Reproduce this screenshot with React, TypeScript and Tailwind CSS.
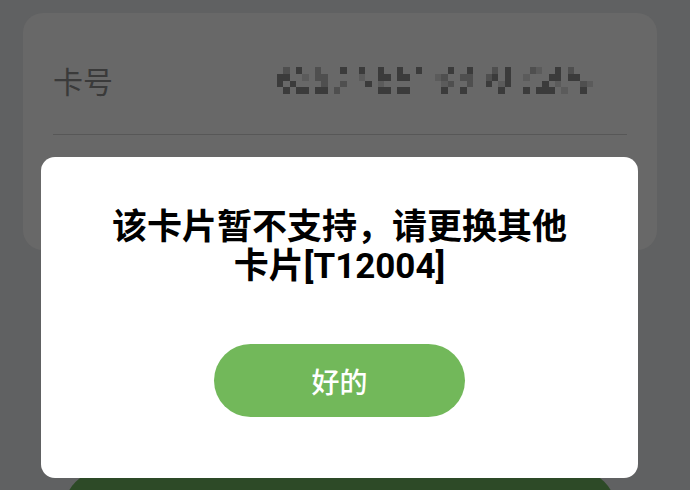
import React from "react";

const rows: Array<Array<[number, number]>> = [
  [[1,2],[3,3],[6,2],[10,3],[13,3],[16,3],[19,3],[22,3],[27,3],[30,3],[34,2],[36,3],[40,2],[41,1],[44,3],[46,2]],
  [[0,3],[1,3],[4,1],[6,2],[7,2],[13,1],[16,3],[17,3],[19,3],[20,3],[25,1],[26,2],[29,2],[30,2],[33,2],[34,3],[36,3],[39,1],[43,3],[44,3],[46,3],[47,3]],
  [[0,3],[2,3],[7,2],[10,2],[14,3],[16,1],[26,1],[27,2],[30,2],[33,3],[35,1],[36,3],[42,3],[44,1],[48,2],[49,1]],
  [[1,3],[3,3],[4,3],[6,3],[7,3],[9,2],[16,3],[17,3],[19,3],[20,3],[26,3],[29,3],[35,3],[39,3],[41,3],[42,3],[43,3],[45,1],[48,3]],
];

const shade: Record<number, string> = { 1: "#5b5b5b", 2: "#4f4f4f", 3: "#3b3b3b" };

function Pixelated() {
  return (
    <svg width="316" height="27" viewBox="0 0 50 4" preserveAspectRatio="none" shapeRendering="crispEdges">
      {rows.map((r, y) =>
        r.map(([x, l]) => <rect key={`${x}-${y}`} x={x} y={y} width={1} height={1} fill={shade[l]} />)
      )}
    </svg>
  );
}

export default function App() {
  return (
    <div
      className="relative w-[690px] h-[490px] overflow-hidden bg-[#606162] flex flex-col"
      style={{ fontFamily: '"Noto Sans CJK SC", "Noto Sans", sans-serif' }}
    >
      <div className="ml-[23px] mr-[33px] mt-[13px] h-[237px] rounded-[20px] bg-[#686868] px-[30px] pt-[39px] shrink-0">
        <div className="flex items-center h-[56px]">
          <span className="w-[224px] text-[30px] leading-none text-[#3a3a3a]">卡号</span>
          <Pixelated />
        </div>
        <div className="mt-[26px] h-px bg-[#575757]" />
      </div>
      <div className="ml-[64px] mr-[74px] mt-[220px] h-[80px] shrink-0 rounded-full bg-[#2d4a27]" />

      <div className="absolute left-[41px] top-[157px] w-[597px] h-[321px] rounded-[14px] bg-white flex flex-col items-center pt-[51px]">
        <div className="w-[470px] text-center text-[35px] leading-[39px] font-bold text-black font-[Roboto,'Noto_Sans_CJK_SC',sans-serif]">
          该卡片暂不支持，请更换其他卡片[T12004]
        </div>
        <button className="mt-[58px] w-[251px] h-[73px] rounded-full bg-[#72b85a] text-white text-[28px] leading-none font-medium">
          好的
        </button>
      </div>
    </div>
  );
}
